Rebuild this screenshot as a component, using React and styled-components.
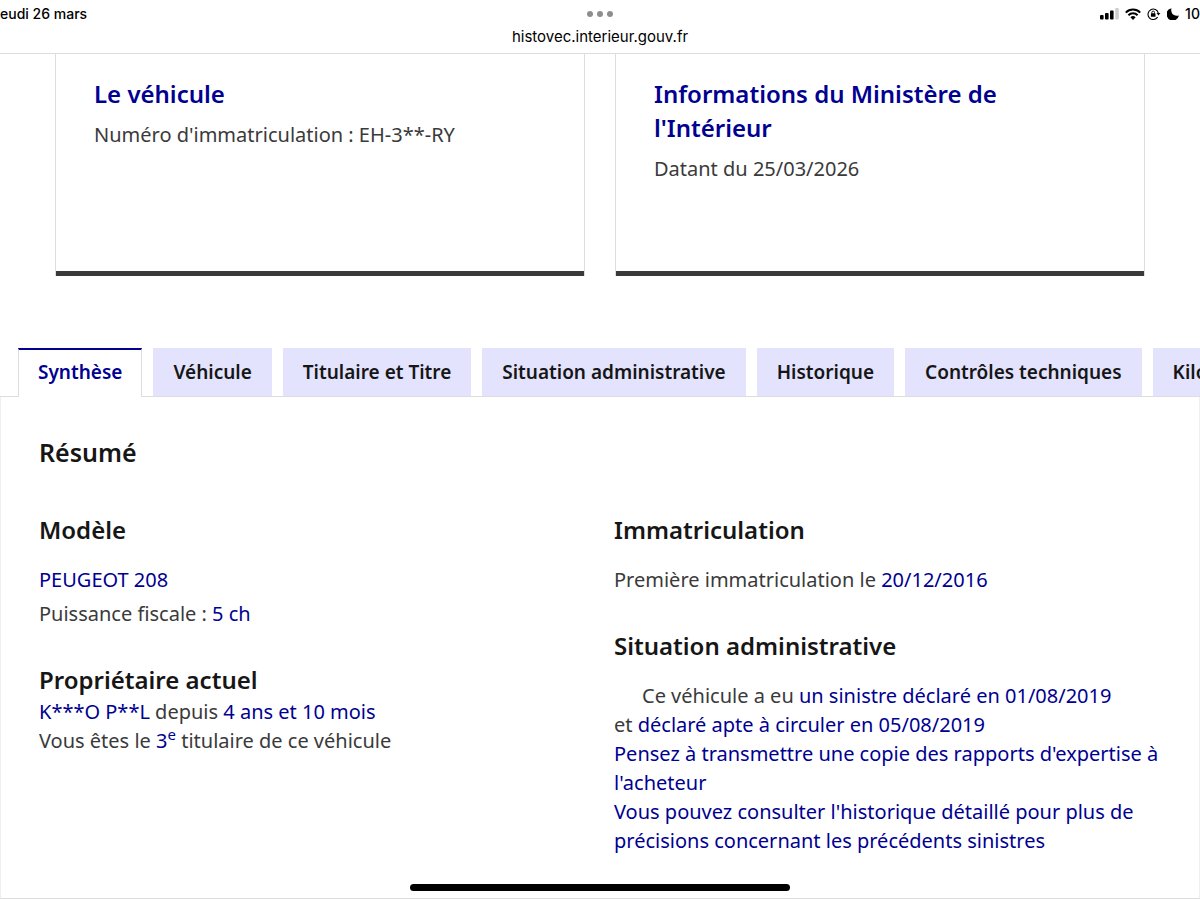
import React from "react";
import styled, { createGlobalStyle, css } from "styled-components";

const ink = "#161616";
const grey = "#3a3a3a";
const blue = "#000091";
const line = "#dddddd";

const GlobalStyle = createGlobalStyle`
  *, *::before, *::after { box-sizing: border-box; }
  body {
    margin: 0;
    background: #fff;
    color: ${grey};
    font-family: "Noto Sans", "Open Sans", sans-serif;
    font-size: 20px;
    line-height: 29px;
    overflow-x: hidden;
  }
  h2, h3, p { margin: 0; }
`;

const Page = styled.div`
  display: flex;
  flex-direction: column;
  min-height: 100vh;
  overflow: hidden;
`;

const BrowserBar = styled.header`
  height: 54px;
  padding-top: 4px;
  border-bottom: 1px solid ${line};
  color: #000;
  font-family: Inter, sans-serif;
`;

const StatusRow = styled.div`
  display: grid;
  grid-template-columns: 1fr auto 1fr;
  align-items: center;
  height: 20px;
  margin: 0 -10px;
  font-size: 14px;
  font-weight: 500;
  line-height: 20px;
  white-space: nowrap;
`;

const StatusDate = styled.span`
  padding-left: 2px;
`;

const Dots = styled.button`
  display: flex;
  gap: 4px;
  padding: 6px 0;
  border: 0;
  background: none;
`;

const Dot = styled.i`
  width: 6px;
  height: 6px;
  border-radius: 50%;
  background: #8e8e8e;
`;

const StatusIcons = styled.div`
  display: flex;
  align-items: center;
  justify-content: flex-end;
  gap: 6px;
  svg { display: block; flex: none; }
`;

const Address = styled.div`
  text-align: center;
  font-size: 15px;
  line-height: 26px;
`;

const Cards = styled.section`
  display: grid;
  grid-template-columns: 1fr 1fr;
  gap: 30px;
  padding: 0 55px;
`;

const Card = styled.article`
  min-height: 222px;
  padding: 23px 38px;
  border: 1px solid ${line};
  border-top: 0;
  border-bottom: 0;
  box-shadow: inset 0 -5px 0 ${grey};
`;

const CardTitle = styled.h3`
  margin-bottom: 9px;
  color: ${blue};
  font-size: 24px;
  font-weight: 600;
  line-height: 34px;
`;

const Tabs = styled.div`
  display: flex;
  gap: 11px;
  margin-top: 72px;
  padding: 0 18px;
  box-shadow: inset 0 -1px 0 ${line};
`;

const Tab = styled.button`
  flex: none;
  height: 49px;
  padding: 0 20px;
  border: 0;
  border-bottom: 1px solid ${line};
  background: #e3e3fd;
  color: ${ink};
  font: inherit;
  font-size: 19px;
  font-weight: 600;
  white-space: nowrap;
  ${(p) =>
    p.$active &&
    css`
      border: 1px solid ${line};
      border-top: 2px solid ${blue};
      border-bottom: 0;
      background: #fff;
      color: ${blue};
      padding: 0 19px 3px;
    `}
`;

const Panel = styled.main`
  flex: 1;
  margin-bottom: 1px;
  padding: 38px 38px 40px;
  border: 1px solid #eeeeee;
  border-top: 0;
  border-bottom-color: ${line};
`;

const PanelTitle = styled.h2`
  color: ${ink};
  font-size: 25px;
  font-weight: 600;
  line-height: 34px;
`;

const Columns = styled.div`
  display: grid;
  grid-template-columns: 1fr 1fr;
  column-gap: 28px;
  margin-top: 44px;
`;

const Block = styled.section`
  margin-top: ${(p) => (p.$spaced ? 35 : 0)}px;
`;

const Heading = styled.h3`
  margin-bottom: ${(p) => (p.$tight ? 0 : 18)}px;
  color: ${ink};
  font-size: 24px;
  font-weight: 600;
  line-height: 34px;
`;

const Line = styled.p`
  margin-top: ${(p) => (p.$spaced ? 5 : 0)}px;
  text-indent: ${(p) => (p.$indent ? 28 : 0)}px;
`;

const Info = styled.span`
  color: ${blue};
`;

const Sup = styled.sup`
  font-size: 15px;
  line-height: 0;
`;

const HomeBar = styled.div`
  position: fixed;
  left: 50%;
  bottom: 9px;
  width: 380px;
  height: 7px;
  border-radius: 4px;
  background: #000;
  transform: translateX(-50%);
`;

const Signal = () => (
  <svg width="19" height="12" viewBox="0 0 19 12">
    <rect x="0" y="7" width="3.6" height="4.6" rx="1" />
    <rect x="5" y="5" width="3.6" height="6.6" rx="1" />
    <rect x="10" y="2.6" width="3.6" height="9" rx="1" />
    <rect x="15.2" y="0" width="3.6" height="11.6" rx="1" fill="#cfcfcf" />
  </svg>
);

const Wifi = () => (
  <svg width="16" height="12" viewBox="0 0 16 12">
    <path d="M.8 4.6a10.2 10.2 0 0 1 14.4 0M3.4 7.2a6.5 6.5 0 0 1 9.2 0" fill="none" stroke="#000" strokeWidth="2" />
    <path d="M5.4 9.2a3.7 3.7 0 0 1 5.2 0L8 11.9z" />
  </svg>
);

const RotationLock = () => (
  <svg width="14" height="12" viewBox="0 0 14 12">
    <path d="M10.6 9.1A5.2 5.2 0 1 1 11.3 5.2" fill="none" stroke="#000" strokeWidth="1.1" />
    <path d="M9.6 5h3.7l-1.8 2.5z" />
    <rect x="3.9" y="5.3" width="4.6" height="3.5" rx=".6" />
    <path d="M4.9 5.6V4.4a1.3 1.3 0 0 1 2.6 0v1.2" fill="none" stroke="#000" strokeWidth=".9" />
  </svg>
);

const Moon = () => (
  <svg width="12" height="12" viewBox="0 0 12 12">
    <path d="M4.400 .2C3.800 3.200 4.700 5.500 6.500 6.700 8.200 7.800 10 7.900 11.900 7.500A6.200 6.200 0 1 1 4.400 .2z" />
  </svg>
);

const tabs = [
  "Synthèse",
  "Véhicule",
  "Titulaire et Titre",
  "Situation administrative",
  "Historique",
  "Contrôles techniques",
  "Kilométrage",
];

export default function App() {
  return (
    <Page>
      <GlobalStyle />
      <BrowserBar>
        <StatusRow>
          <StatusDate>Jeudi 26 mars</StatusDate>
          <Dots aria-label="Options de fenêtre">
            <Dot />
            <Dot />
            <Dot />
          </Dots>
          <StatusIcons>
            <Signal />
            <Wifi />
            <RotationLock />
            <Moon />
            <span>10:1</span>
          </StatusIcons>
        </StatusRow>
        <Address>histovec.interieur.gouv.fr</Address>
      </BrowserBar>

      <Cards>
        <Card>
          <CardTitle>Le véhicule</CardTitle>
          <p>Numéro d'immatriculation : EH-3**-RY</p>
        </Card>
        <Card>
          <CardTitle>Informations du Ministère de l'Intérieur</CardTitle>
          <p>Datant du 25/03/2026</p>
        </Card>
      </Cards>

      <Tabs role="tablist">
        {tabs.map((label, i) => (
          <Tab key={label} role="tab" aria-selected={i === 0} $active={i === 0}>
            {label}
          </Tab>
        ))}
      </Tabs>

      <Panel>
        <PanelTitle>Résumé</PanelTitle>
        <Columns>
          <div>
            <Block>
              <Heading>Modèle</Heading>
              <Line><Info>PEUGEOT 208</Info></Line>
              <Line $spaced>Puissance fiscale : <Info>5 ch</Info></Line>
            </Block>
            <Block $spaced>
              <Heading $tight>Propriétaire actuel</Heading>
              <Line><Info>K***O P**L</Info> depuis <Info>4 ans et 10 mois</Info></Line>
              <Line>Vous êtes le <Info>3<Sup>e</Sup></Info> titulaire de ce véhicule</Line>
            </Block>
          </div>
          <div>
            <Block>
              <Heading>Immatriculation</Heading>
              <Line>Première immatriculation le <Info>20/12/2016</Info></Line>
            </Block>
            <Block $spaced>
              <Heading>Situation administrative</Heading>
              <Line $indent>
                Ce véhicule a eu <Info>un sinistre déclaré en 01/08/2019</Info>
              </Line>
              <Line>et <Info>déclaré apte à circuler en 05/08/2019</Info></Line>
              <Line><Info>Pensez à transmettre une copie des rapports d'expertise à l'acheteur</Info></Line>
              <Line>
                <Info>
                  Vous pouvez consulter l'historique détaillé pour plus de précisions concernant les
                  précédents sinistres
                </Info>
              </Line>
            </Block>
          </div>
        </Columns>
      </Panel>
      <HomeBar />
    </Page>
  );
}
